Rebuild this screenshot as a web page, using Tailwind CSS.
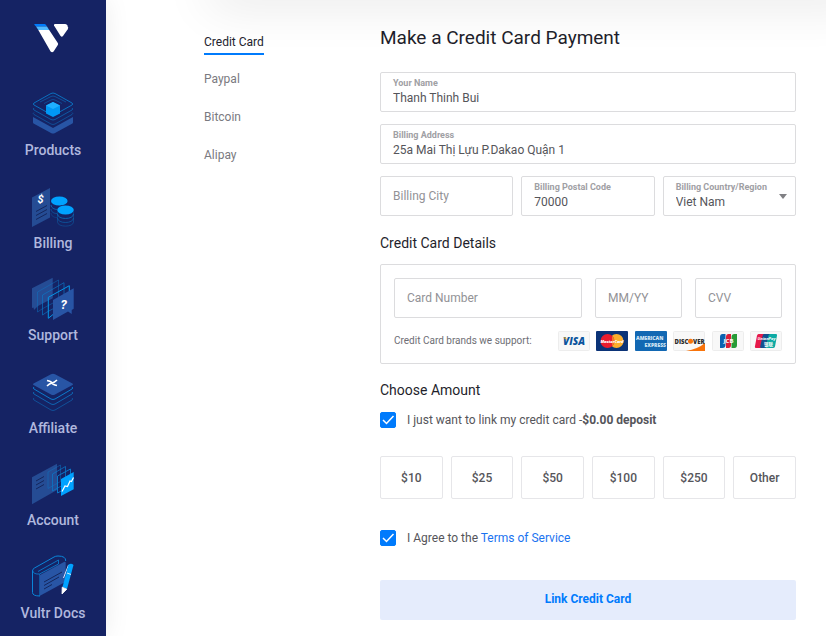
<!DOCTYPE html>
<html lang="en">
<head>
    <meta charset="UTF-8">
    <meta name="viewport" content="width=device-width, initial-scale=1.0">
    <title>Make a Credit Card Payment</title>
    <script src="https://cdn.jsdelivr.net/npm/@tailwindcss/browser@4"></script>
</head>
<body class="bg-white font-[Roboto,sans-serif] text-xs text-[#55555a]">
    <div class="flex min-h-screen">

        <!-- Sidebar -->
        <aside class="relative z-10 flex w-[106px] shrink-0 flex-col bg-[#152364] pt-[23px] pb-[13px] shadow-[0_0_24px_rgba(0,0,0,0.08)]">
            <a href="#" aria-label="Home" class="mx-auto block">
                <svg width="38" height="30" viewBox="0 0 38 30">
                    <path d="M1 1h9.500q1 0 1.500 1l1 1.500H2L.3 1.800Q0 1 1 1z" fill="#007bfc"/>
                    <path d="M2 3.500h11l2.200 3.500H4.300z" fill="#51b9ff"/>
                    <path d="M4.300 7h10.900l8.600 13q.7 1 0 2l-4.200 6.500q-1.500 1.500-3 0z" fill="#fff"/>
                    <path d="M21 1h10q1.500 0 2.200 1.200l.8 2q.3 1-.3 2L29 13q-1.200 1.500-2.400 0L20 2.500Q19.500 1 21 1z" fill="#fff"/>
                </svg>
            </a>
            <nav class="mt-[38px] flex flex-1 flex-col justify-between gap-4 text-center text-sm font-medium text-[#b0b8de]">
                <a href="#" class="flex flex-col items-center gap-[5px]">
                    <svg width="44" height="44" viewBox="-1 -1 44 44" fill="none">
                        <path d="M1 25l20 11 20-11v5.500q0 .8-1 1.300L23 41q-2 1-4 0L2 31.800q-1-.5-1-1.300z" fill="#2855a5"/>
                        <g stroke="#0a78c8" stroke-width=".9">
                            <path d="M2 20.500q-1.500 1 0 2L19 32q2 1 4 0l17-9.500q1.500-1 0-2" opacity=".55"/>
                            <path d="M2 16q-1.500 1 0 2L19 27.500q2 1 4 0L40 18q1.500-1 0-2" opacity=".7"/>
                            <path d="M8 10l11-5.500q2-1 4 0L34 10" opacity=".6"/>
                            <path d="M12 11.500l7-3.500q2-1 4 0l7 3.500" opacity=".5"/>
                            <path d="M2 11l17-9.500q2-1 4 0L40 11q1.500 1 0 2l-17 9.500q-2 1-4 0L2 13q-1.500-1 0-2z"/>
                        </g>
                        <path d="M14 13.500l7-3.500 7 3.500v8L21 25l-7-3.500z" fill="#0098f5"/>
                        <path d="M14 13.500l7-3.500 7 3.500-7 3.500z" fill="#1fb0ff"/>
                    </svg>
                    <span class="leading-5">Products</span>
                </a>
                <a href="#" class="flex flex-col items-center gap-[5px]">
                    <svg width="44" height="44" viewBox="-1 -1 44 44" fill="none">
                        <path d="M0 12.500L18 3v29.500L0 42z" fill="#254c94"/>
                        <text x="5.500" y="18" font-family="Roboto, sans-serif" font-size="11" font-weight="700" font-style="italic" fill="#fff">$</text>
                        <path d="M4 26.500l11-6M4 30.500l11-6M4 34.500l11-6" stroke="#14265c"/>
                        <g stroke="#0a68b2" stroke-width=".9">
                            <path d="M19 20c0 6 13 6 16.500 1" />
                            <path d="M19 24c0 3 3 4.500 6 4.500" opacity=".7"/>
                            <path d="M19 28c0 3 3 4.500 6 4.500" opacity=".4"/>
                            <path d="M25.500 29c0 6 16 6 16 0"/>
                            <path d="M25.500 33c0 6 16 6 16 0" opacity=".7"/>
                            <path d="M25.500 26v11c0 5.500 16 5.500 16 0V26" opacity=".5"/>
                        </g>
                        <ellipse cx="27.300" cy="16" rx="8.300" ry="4.500" fill="#00a2ff"/>
                        <ellipse cx="33.500" cy="25" rx="8.800" ry="5" fill="#152364"/>
                        <ellipse cx="33.500" cy="25" rx="8.300" ry="4.500" fill="#00a2ff"/>
                    </svg>
                    <span class="leading-5">Billing</span>
                </a>
                <a href="#" class="flex flex-col items-center gap-[5px]">
                    <svg width="44" height="44" viewBox="-1 -1 44 44" fill="none">
                        <path d="M0 11.300L20.700.7v20.600L6 29l-4 4-.5-2.500L0 31z" fill="#254c94"/>
                        <g stroke="#0a78c8">
                            <path d="M5.500 15L26.500 3v20L10 32l-4.500 3z" opacity=".45"/>
                            <path d="M10.500 18L32 5.700V26L15 35l-4.500 3z" opacity=".65"/>
                            <path d="M16.300 20.300l21-11.600V14M16.300 20.300v21l5-4" stroke="#0596e8"/>
                        </g>
                        <path d="M21 23l20.700-11.700v20.500l-2 1.200v4L36 34.500 21 43z" fill="#2855a5"/>
                        <text x="28.500" y="32" font-family="Roboto, sans-serif" font-size="13" font-weight="700" font-style="italic" fill="#fff">?</text>
                    </svg>
                    <span class="leading-5">Support</span>
                </a>
                <a href="#" class="flex flex-col items-center gap-[5px]">
                    <svg width="44" height="44" viewBox="-1 -1 44 44" fill="none">
                        <g stroke="#0a85d8" stroke-width=".9">
                            <path d="M2 17q-1.500 1 0 2l17 10q2 1 4 0l17-10q1.500-1 0-2"/>
                            <path d="M2 22q-1.500 1 0 2l17 10q2 1 4 0l17-10q1.500-1 0-2" opacity=".75"/>
                            <path d="M2 28q-1.500 1 0 2l17 10q2 1 4 0l17-10q1.500-1 0-2" opacity=".5"/>
                        </g>
                        <path d="M2 13.300L19 4.200q2-1 4 0l17 9.100q2 1 0 2l-17 9.200q-2 1-4 0L2 15.300q-2-1 0-2z" fill="#2855a5"/>
                        <path d="M15 10.500q4.500 1 5 2.500t5 2.500M25 10q-2.500 2.500-5 3t-5 3" stroke="#fff" stroke-width="1.600"/>
                    </svg>
                    <span class="leading-5">Affiliate</span>
                </a>
                <a href="#" class="flex flex-col items-center gap-[5px]">
                    <svg width="44" height="44" viewBox="-1 -1 44 44" fill="none">
                        <path d="M0 15.300L25 1.700V28L0 42.300z" fill="#254c94"/>
                        <path d="M4 19l8-4.500M4 23l8-4.500M4 27l8-4.500" stroke="#14265c"/>
                        <g stroke="#0a78c8">
                            <path d="M16 10l12.500-7v16.500L16 26.500z" opacity=".45"/>
                            <path d="M20.500 12L33.500 4.500v17L20.500 29z" opacity=".75"/>
                            <path d="M25.500 14l13-7v17l-13 7z"/>
                        </g>
                        <path d="M29 17l12.700-7v17.300L29 34z" fill="#00a2ff"/>
                        <path d="M30 29.500l3-5.500 2.500.5 2.500-5.500 1.500.5 2-4" stroke="#fff" stroke-width="1.200"/>
                    </svg>
                    <span class="leading-5">Account</span>
                </a>
                <a href="#" class="flex flex-col items-center gap-[5px]">
                    <svg width="44" height="44" viewBox="-1 -1 44 44" fill="none">
                        <path d="M8 20L32 7q1.700-.7 1.700 1v18.700L8 40.700z" fill="#2855a5"/>
                        <g stroke="#0a85d8">
                            <path d="M8 41q-7.500 0-7.500-3.500V16q0-2 2-3L22 2q1.500-1 4-1 8 0 7.700 5"/>
                            <path d="M.5 15.500q1 4 7 3.500L26.500 9V5L6 16.500" opacity=".8"/>
                            <path d="M7.500 19v22" opacity=".5"/>
                        </g>
                        <path d="M12 27l18-10M12 30.500l15-8.500M12 34l8-4.500" stroke="#14265c"/>
                        <path d="M36.500 10l-5 13" stroke="#dde6ff"/>
                        <path d="M36.500 9.500q3-1.500 5 .5L35 34l-4.500-2z" fill="#00a2ff"/>
                        <path d="M35 18l4 1.500M30.200 32.200l4.600 2L30 39z" fill="#fff" stroke="#fff" stroke-width=".8"/>
                    </svg>
                    <span class="leading-5">Vultr Docs</span>
                </a>
            </nav>
        </aside>

        <main class="relative grid flex-1 grid-cols-[176px_1fr] overflow-hidden pr-[30px] pl-[98px]">
            <div class="absolute -top-5 -right-10 left-[104px] h-5 shadow-[0_0_50px_rgba(0,0,0,0.16)]"></div>

            <!-- Payment methods -->
            <nav class="flex flex-col items-start gap-[18px] pt-[33px] text-[#7a7a80]">
                <a href="#" class="border-b-2 border-[#007bfc] pb-[2px] leading-[18px] text-[#23232e]">Credit Card</a>
                <a href="#" class="-mt-1 leading-5">Paypal</a>
                <a href="#" class="leading-5">Bitcoin</a>
                <a href="#" class="leading-5">Alipay</a>
            </nav>

            <form class="pt-6 pb-4">
                <h1 class="text-[19px] leading-7 text-[#1f1f2c]">Make a Credit Card Payment</h1>

                <div class="mt-5 flex h-10 flex-col rounded-xs border border-[#dcdcde] px-3 pt-1">
                    <label for="name" class="text-[9px] leading-3 font-bold text-[#a0a0a4]">Your Name</label>
                    <input id="name" type="text" value="Thanh Thinh Bui" class="w-full leading-[18px] outline-none">
                </div>
                <div class="mt-3 flex h-10 flex-col rounded-xs border border-[#dcdcde] px-3 pt-1">
                    <label for="address" class="text-[9px] leading-3 font-bold text-[#a0a0a4]">Billing Address</label>
                    <input id="address" type="text" value="25a Mai Thị Lựu P.Dakao Quận 1" class="w-full leading-[18px] outline-none">
                </div>
                <div class="mt-3 grid grid-cols-3 gap-2">
                    <input type="text" aria-label="Billing City" placeholder="Billing City" class="h-10 w-full rounded-xs border border-[#dcdcde] px-3 outline-none placeholder:text-[#929296]">
                    <div class="flex h-10 flex-col rounded-xs border border-[#dcdcde] px-3 pt-1">
                        <label for="postal" class="text-[9px] leading-3 font-bold text-[#a0a0a4]">Billing Postal Code</label>
                        <input id="postal" type="text" value="70000" class="w-full leading-[18px] outline-none">
                    </div>
                    <div class="relative flex h-10 flex-col rounded-xs border border-[#dcdcde] px-3 pt-1">
                        <label for="country" class="text-[9px] leading-3 font-bold text-[#a0a0a4]">Billing Country/Region</label>
                        <select id="country" class="w-full appearance-none leading-[18px] outline-none">
                            <option>Viet Nam</option>
                        </select>
                        <svg class="pointer-events-none absolute top-[17px] right-2" width="8" height="5" viewBox="0 0 8 5"><path d="M0 0h8L4 5z" fill="#808084"/></svg>
                    </div>
                </div>

                <h2 class="mt-[17px] text-sm leading-5 text-[#1f1f2c]">Credit Card Details</h2>
                <div class="mt-[11px] rounded-xs border border-[#dcdcde] p-[13px] pb-3">
                    <div class="grid grid-cols-[188fr_87fr_87fr] gap-[13px]">
                        <input type="text" aria-label="Card Number" placeholder="Card Number" class="h-10 w-full rounded-xs border border-[#dcdcde] px-3 outline-none placeholder:text-[#929296]">
                        <input type="text" aria-label="Expiry date" placeholder="MM/YY" class="h-10 w-full rounded-xs border border-[#dcdcde] px-3 outline-none placeholder:text-[#929296]">
                        <input type="text" aria-label="CVV" placeholder="CVV" class="h-10 w-full rounded-xs border border-[#dcdcde] px-3 outline-none placeholder:text-[#929296]">
                    </div>
                    <div class="mt-[13px] flex items-center justify-between">
                        <p class="text-[10px] leading-5 whitespace-nowrap text-[#6e6e74]">Credit Card brands we support:</p>
                        <div class="flex w-56 justify-between font-['Open_Sans',sans-serif]">
                            <svg width="32" height="20" viewBox="0 0 32 20" role="img" aria-label="Visa">
                                <rect x=".5" y=".5" width="31" height="19" rx="1" fill="#f8f8f8" stroke="#ededed"/>
                                <text x="16" y="14" text-anchor="middle" font-size="10" font-weight="800" font-style="italic" fill="#0a549d">VISA</text>
                                <path d="M5 6.500h3l1 3q-1.500-2-4-3z" fill="#f2ae14"/>
                            </svg>
                            <svg width="32" height="20" viewBox="0 0 32 20" role="img" aria-label="MasterCard">
                                <rect width="32" height="20" rx="1" fill="#0b3377"/>
                                <circle cx="20.500" cy="10" r="7" fill="#fbae2c"/>
                                <circle cx="11.500" cy="10" r="7" fill="#ea1c2d"/>
                                <path d="M16 4.700a7 7 0 0 1 0 10.600" fill="#f27a2b"/>
                                <text x="16" y="11.500" text-anchor="middle" font-size="4" font-weight="800" font-style="italic" fill="#fff">MasterCard</text>
                            </svg>
                            <svg width="32" height="20" viewBox="0 0 32 20" role="img" aria-label="American Express">
                                <rect width="32" height="20" rx="1" fill="#1268b3"/>
                                <g font-size="5" font-weight="800" fill="#d4e6f5">
                                    <text x="1" y="9">AMERICAN</text>
                                    <text x="31" y="16" text-anchor="end">EXPRESS</text>
                                </g>
                            </svg>
                            <svg width="32" height="20" viewBox="0 0 32 20" role="img" aria-label="Discover">
                                <rect x=".5" y=".5" width="31" height="19" rx="1" fill="#f8f8f8" stroke="#ededed"/>
                                <path d="M32 12v8H13q12-2 19-8z" fill="#f8740b"/>
                                <text x="1.500" y="12.500" font-size="6" font-weight="800" fill="#2c2c2c">DISC</text>
                                <circle cx="17.500" cy="10.200" r="2.500" fill="#f8740b"/>
                                <text x="20" y="12.500" font-size="6" font-weight="800" fill="#2c2c2c">VER</text>
                            </svg>
                            <svg width="32" height="20" viewBox="0 0 32 20" role="img" aria-label="JCB">
                                <rect x=".5" y=".5" width="31" height="19" rx="1" fill="#f8f8f8" stroke="#ededed"/>
                                <path d="M10.500 3H13.500v11q0 3-3 3H8V6q0-3 2.500-3z" fill="#0d63b0"/>
                                <path d="M16.500 3H19v11q0 3-2.500 3H14V6q0-3 2.500-3z" fill="#dc1f38"/>
                                <path d="M22.500 3H25v11q0 3-2.500 3h-3V6q0-3 3-3z" fill="#279b37"/>
                                <text x="16.500" y="12.200" text-anchor="middle" font-size="6" font-weight="700" fill="#fff">JCB</text>
                            </svg>
                            <svg width="32" height="20" viewBox="0 0 32 20" role="img" aria-label="UnionPay">
                                <rect x=".5" y=".5" width="31" height="19" rx="1" fill="#f8f8f8" stroke="#ededed"/>
                                <path d="M8.500 3H15l-3.500 14H6q-1.500 0-1-2L7 4.500Q7.500 3 8.500 3z" fill="#e6194a"/>
                                <path d="M14 3h6.500L17 17h-6q-1 0-.7-2l2.400-10.500Q13 3 14 3z" fill="#12508f"/>
                                <path d="M20 3h6q1.500 0 1 1.500L25 15.500q-.5 1.500-2 1.500h-6.500q-1 0-.7-1.500L18.500 4.500Q19 3 20 3z" fill="#0caaa4"/>
                                <text x="16.500" y="9.300" text-anchor="middle" font-size="4" font-weight="700" font-style="italic" fill="#fff">UnionPay</text>
                                <text x="18.500" y="14.500" text-anchor="middle" font-family="Noto Sans CJK SC, sans-serif" font-size="4.500" font-weight="700" fill="#fff">银联</text>
                            </svg>
                        </div>
                    </div>
                </div>

                <h2 class="mt-4 text-sm leading-5 text-[#1f1f2c]">Choose Amount</h2>
                <label class="mt-[10px] flex items-center gap-[11px] leading-5">
                    <span class="relative flex size-4">
                        <input type="checkbox" checked class="size-4 appearance-none rounded-xs border border-[#dcdcde] checked:border-[#007bfc] checked:bg-[#007bfc]">
                        <svg class="pointer-events-none absolute inset-0" width="16" height="16" viewBox="0 0 16 16" fill="none"><path d="M3 8l3.500 3.500L13.500 4" stroke="#fff" stroke-width="1.500"/></svg>
                    </span>
                    <span>I just want to link my credit card -<b>$0.00 deposit</b></span>
                </label>

                <div class="mt-[26px] grid grid-cols-6 gap-2 font-medium">
                    <button type="button" class="h-[43px] rounded-xs border border-[#e6e6e9]">$10</button>
                    <button type="button" class="h-[43px] rounded-xs border border-[#e6e6e9]">$25</button>
                    <button type="button" class="h-[43px] rounded-xs border border-[#e6e6e9]">$50</button>
                    <button type="button" class="h-[43px] rounded-xs border border-[#e6e6e9]">$100</button>
                    <button type="button" class="h-[43px] rounded-xs border border-[#e6e6e9]">$250</button>
                    <button type="button" class="h-[43px] rounded-xs border border-[#e6e6e9]">Other</button>
                </div>

                <div class="mt-[29px] flex items-center gap-[11px] leading-5">
                    <span class="relative flex size-4">
                        <input id="agree" type="checkbox" checked class="size-4 appearance-none rounded-xs border border-[#dcdcde] checked:border-[#007bfc] checked:bg-[#007bfc]">
                        <svg class="pointer-events-none absolute inset-0" width="16" height="16" viewBox="0 0 16 16" fill="none"><path d="M3 8l3.500 3.500L13.500 4" stroke="#fff" stroke-width="1.500"/></svg>
                    </span>
                    <label for="agree">I Agree to the <a href="#" class="text-[#1a73f0]">Terms of Service</a></label>
                </div>

                <button type="submit" class="mt-8 h-10 w-full rounded-xs bg-[#e5ecfc] pb-[2px] font-bold text-[#007bfc]">Link Credit Card</button>
            </form>
        </main>
    </div>
</body>
</html>
